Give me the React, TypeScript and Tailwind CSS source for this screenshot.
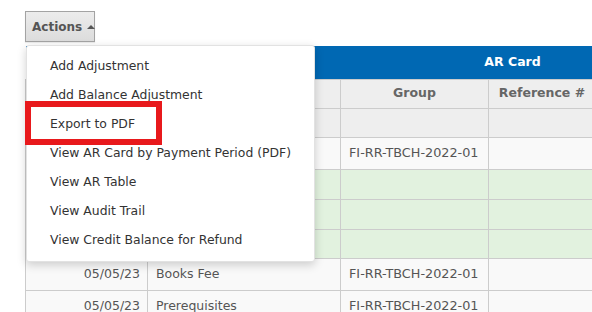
const menuItems = [
  "Add Adjustment",
  "Add Balance Adjustment",
  "Export to PDF",
  "View AR Card by Payment Period (PDF)",
  "View AR Table",
  "View Audit Trail",
  "View Credit Balance for Refund",
];

type Row = { date?: string; desc?: string; group?: string; bg: string; h: string };

const rows: Row[] = [
  { bg: "bg-[#eeeeee]", h: "h-[29px]" },
  { group: "FI-RR-TBCH-2022-01", bg: "bg-[#f9f9f9]", h: "h-[32px]" },
  { bg: "bg-[#e2f2df]", h: "h-[30px]" },
  { bg: "bg-[#e2f2df]", h: "h-[30px]" },
  { bg: "bg-[#e2f2df]", h: "h-[29px]" },
  { date: "05/05/23", desc: "Books Fee", group: "FI-RR-TBCH-2022-01", bg: "bg-[#f9f9f9]", h: "h-[32px]" },
  { date: "05/05/23", desc: "Prerequisites", group: "FI-RR-TBCH-2022-01", bg: "bg-[#f9f9f9]", h: "h-[32px]" },
];

const App = () => {
  return (
    <div className="w-[592px] h-[312px] overflow-hidden bg-white font-['DejaVu_Sans',sans-serif] text-[12.5px] text-[#444]">
      <div className="pl-[25px] pt-[11px]">
        {/* Actions button */}
        <button className="flex items-center gap-[5px] h-[31px] w-[70px] pl-[6px] border border-[#a3a3a3] bg-gradient-to-b from-[#ececec] to-[#dcdcdc] text-[12px] font-bold text-[#555] shadow-[0_1px_1px_rgba(0,0,0,0.08)]">
          Actions
          <span className="w-0 h-0 border-l-[4px] border-r-[4px] border-b-[4px] border-l-transparent border-r-transparent border-b-[#555]" />
        </button>

        <div className="relative mt-[4px]">
          {/* Table */}
          <table className="border-collapse table-fixed w-[975px] text-[#555]">
            <colgroup>
              <col className="w-[122px]" />
              <col className="w-[193px]" />
              <col className="w-[148px]" />
              <col className="w-[107px]" />
              <col />
            </colgroup>
            <thead>
              <tr className="h-[33px] bg-[#0068b3]">
                <th colSpan={5} className="text-white font-bold text-[12.5px] text-center">AR Card</th>
              </tr>
              <tr className="h-[29px] bg-[#eeeeee]">
                <th className="border border-[#cccccc]" />
                <th className="border border-[#cccccc]" />
                <th className="border border-[#cccccc] font-bold text-[#666] text-center">Group</th>
                <th className="border border-[#cccccc] font-bold text-[#666] text-center">Reference #</th>
                <th className="border border-[#cccccc]" />
              </tr>
            </thead>
            <tbody>
              {rows.map((r, i) => (
                <tr key={i} className={`${r.h} ${r.bg}`}>
                  <td className="border border-[#cccccc] text-right pr-[7px] whitespace-nowrap">{r.date}</td>
                  <td className="border border-[#cccccc] pl-[8px] whitespace-nowrap">{r.desc}</td>
                  <td className="border border-[#cccccc] pl-[8px] whitespace-nowrap text-[12.8px]">{r.group}</td>
                  <td className="border border-[#cccccc]" />
                  <td className="border border-[#cccccc]" />
                </tr>
              ))}
            </tbody>
          </table>

          {/* Dropdown menu */}
          <div className="absolute left-[1px] top-[-1px] w-[289px] bg-white rounded-[3px] border border-[#e2e2e2] shadow-[0_3px_10px_rgba(0,0,0,0.18)] pt-[6px] pb-[6px]">
            {menuItems.map((item) => (
              <div key={item} className="h-[29px] flex items-center pl-[23px] text-[12.4px] text-[#333] whitespace-nowrap">
                {item}
              </div>
            ))}
          </div>

          {/* Highlight box */}
          <div className="absolute left-0 top-[55px] w-[137px] h-[44px] border-[6px] border-[#e8191c]" />
        </div>
      </div>
    </div>
  );
};

export default App;
